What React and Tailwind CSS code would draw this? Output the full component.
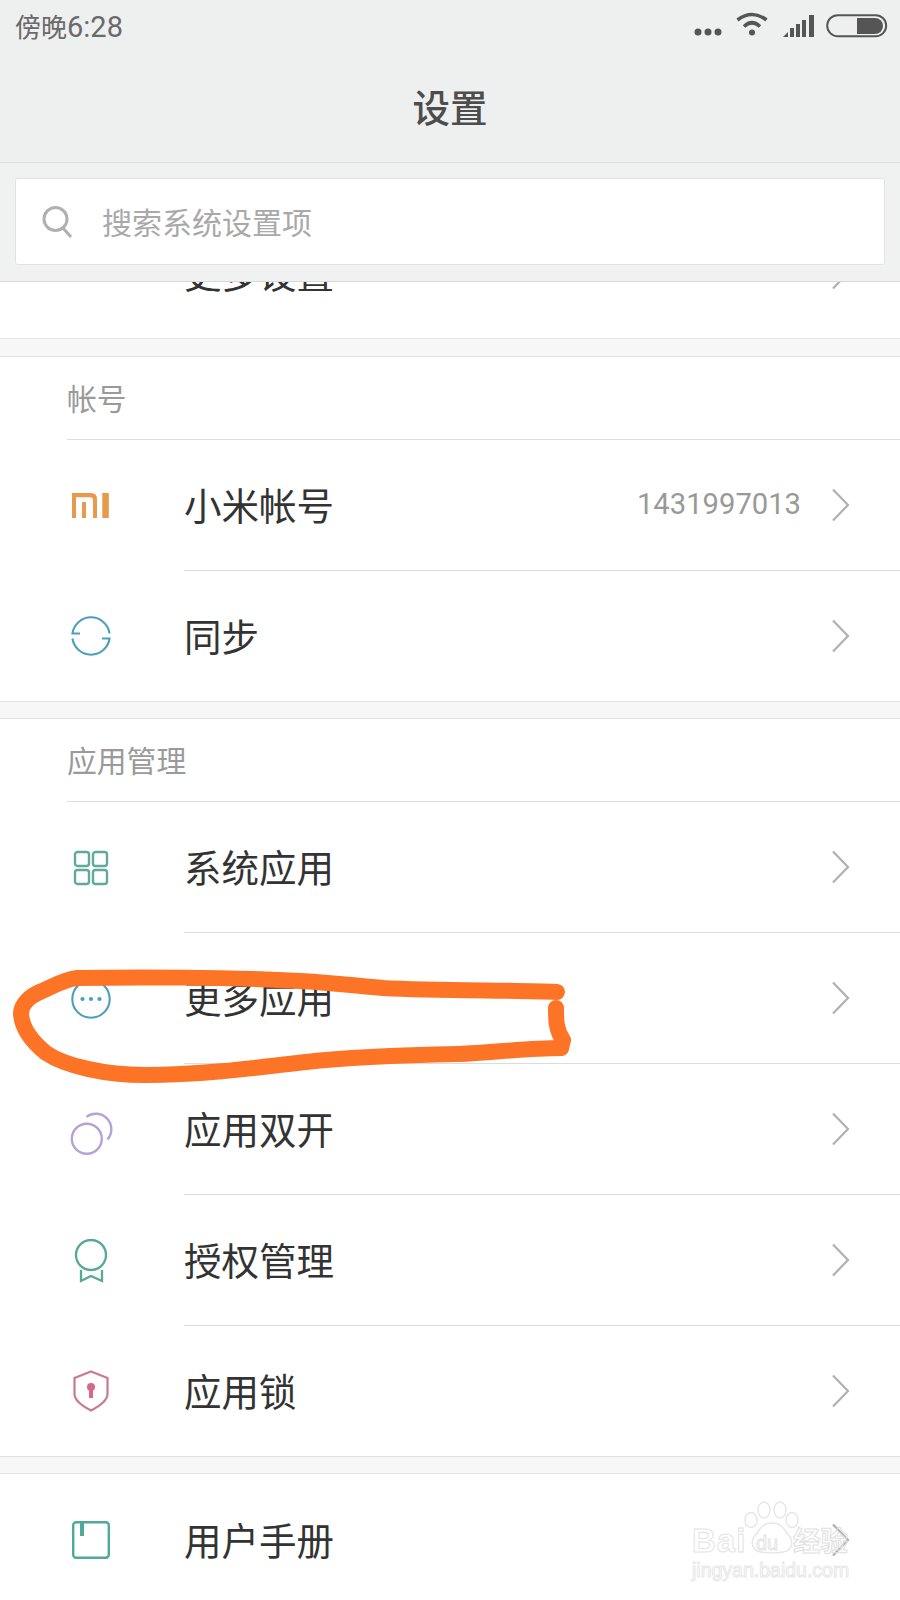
import React from "react";

const cjk = "font-['Noto_Sans_CJK_SC','Noto_Sans',sans-serif]";

const Chevron = () => (
  <svg width="19" height="34" viewBox="0 0 19 34" fill="none" stroke="#b0b0b0" strokeWidth="2.2">
    <path d="M2 1.5 L17 17 L2 32.5" />
  </svg>
);

const MiIcon = () => (
  <svg width="37" height="25" viewBox="0 0 37 25" fill="#e8994c">
    <path d="M0 0 H19 Q25 0 25 6 V25 H21 V7 Q21 4.3 18 4.3 H4 V25 H0 Z" />
    <rect x="10" y="9" width="4" height="16" />
    <rect x="30.3" y="0" width="6.5" height="25" />
  </svg>
);

const SyncIcon = () => (
  <svg width="40" height="40" viewBox="0 0 40 40" fill="none" stroke="#4c9fbc" strokeWidth="2.1">
    <path d="M9 17.5 H1.47 A18.7 18.7 0 0 1 38.53 17.5" />
    <path d="M31 22.5 H38.53 A18.7 18.7 0 0 1 1.47 22.5" />
  </svg>
);

const GridIcon = () => (
  <svg width="36" height="36" viewBox="0 0 36 36" fill="none" stroke="#60a99b" strokeWidth="2.4">
    <rect x="2" y="2" width="14" height="14" rx="2.5" />
    <rect x="20" y="2" width="14" height="14" rx="2.5" />
    <rect x="2" y="20" width="14" height="14" rx="2.5" />
    <rect x="20" y="20" width="14" height="14" rx="2.5" />
  </svg>
);

const MoreIcon = () => (
  <svg width="40" height="40" viewBox="0 0 40 40" fill="none">
    <circle cx="20" cy="20" r="18.7" stroke="#4c9fbc" strokeWidth="2.1" />
    <circle cx="11.5" cy="20" r="2.1" fill="#4c9fbc" />
    <circle cx="20" cy="20" r="2.1" fill="#4c9fbc" />
    <circle cx="28.5" cy="20" r="2.1" fill="#4c9fbc" />
  </svg>
);

const DualIcon = () => (
  <svg width="50" height="50" viewBox="2 0 50 50" fill="none" stroke="#b7a2d8" strokeWidth="2.4">
    <circle cx="22.8" cy="33.8" r="15" />
    <path d="M22.4 11.9 A15.5 15.5 0 0 1 43.5 34.4" />
  </svg>
);

const RibbonIcon = () => (
  <svg width="34" height="44" viewBox="0 0 34 44" fill="none" stroke="#57a895" strokeWidth="2.3">
    <circle cx="17" cy="16" r="15" />
    <path d="M7 31 V42 L17 37 L28 42 V31" />
  </svg>
);

const ShieldIcon = () => (
  <svg width="36" height="42" viewBox="0 0 36 42" fill="none">
    <path d="M18 1.5 L34.5 8 V24 Q34.5 32 18 40.5 Q1.5 32 1.5 24 V8 Z" stroke="#c97b8e" strokeWidth="2.2" />
    <circle cx="18" cy="17" r="4" fill="#d8678a" />
    <rect x="16" y="18" width="4" height="10" fill="#d8678a" />
  </svg>
);

const BookIcon = () => (
  <svg width="38" height="38" viewBox="0 0 38 38" fill="none" stroke="#4fa898">
    <rect x="1.2" y="1.2" width="35.6" height="35.6" rx="3" strokeWidth="2.4" />
    <rect x="8" y="1" width="4" height="14" fill="#4fa898" stroke="none" />
  </svg>
);

const Row = ({ icon, title, value, divider = true, h = "h-[131px]" }) => (
  <div className={`flex ${h} bg-white`}>
    <div className="w-[184px] shrink-0 flex items-center justify-center pr-[3px]">{icon}</div>
    <div className={`flex-1 flex items-center justify-between pr-[50px] ${divider ? "border-b border-[#dcdcdc]" : ""}`}>
      <span className="text-[37.5px] leading-none text-[#333333] mb-[2px]">{title}</span>
      <div className="flex items-center gap-[30px]">
        {value && <span className="font-['Roboto',sans-serif] text-[29.2px] leading-none text-[#999999]">{value}</span>}
        <Chevron />
      </div>
    </div>
  </div>
);

const SectionTitle = ({ children }) => (
  <div className="h-[83px] bg-white pl-[67px]">
    <div className="h-full flex items-center border-b border-[#dcdcdc] text-[29.8px] leading-none text-[#9a9a9a] pb-[1px]">
      {children}
    </div>
  </div>
);

const Gap = ({ h = "h-[19px]" }) => <div className={`${h} bg-[#f7f7f7] border-y border-[#e3e3e3]`}></div>;

const App = () => {
  return (
    <div className={`relative w-[900px] h-[1600px] overflow-hidden bg-white ${cjk}`}>
      {/* status + title */}
      <div className="h-[163px] bg-[#eef0f0] border-b border-[#dcdddd] px-[15px] relative">
        <div className="flex items-center justify-between h-[52px]">
          <span className="text-[26px] leading-none text-[#6a6a6a] mt-[2px]">
            傍晚<span className="font-['Roboto',sans-serif] text-[29px]">6:28</span>
          </span>
          <div className="flex items-center">
            <svg width="28" height="8" viewBox="0 0 28 8" fill="#555" className="mt-[11px] mr-[14px]">
              <circle cx="4" cy="4" r="3.5" />
              <circle cx="14" cy="4" r="3.5" />
              <circle cx="24" cy="4" r="3.5" />
            </svg>
            <svg width="32" height="24" viewBox="0 0 32 24" fill="none" stroke="#555" strokeWidth="3.6" className="mb-[4px] mr-[15px]">
              <path d="M1.5 8 Q16 -3 30.5 8" />
              <path d="M8 14.5 Q16 7 24 14.5" />
              <circle cx="16" cy="20.5" r="3" fill="#555" stroke="none" />
            </svg>
            <svg width="32" height="22" viewBox="0 0 32 22" fill="#555" className="mr-[11px]">
              <path d="M0 22 L5 17 V22 Z" />
              <rect x="7" y="13" width="4" height="9" />
              <rect x="13" y="9" width="4" height="13" />
              <rect x="19" y="5" width="4" height="17" />
              <rect x="26" y="0" width="5" height="22" />
            </svg>
            <svg width="62" height="24" viewBox="0 0 62 24" fill="none" className="mr-[-3px]">
              <rect x="1.2" y="1.2" width="59" height="21" rx="10.5" stroke="#555" strokeWidth="2" />
              <path d="M31 4 H49 A8 8 0 0 1 49 20 H31 Z" fill="#555" />
            </svg>
          </div>
        </div>
        <div className="flex justify-center mt-[35px]">
          <span className="text-[37.5px] leading-none font-medium text-[#4d4d4d]">设置</span>
        </div>
      </div>

      {/* search */}
      <div className="relative z-10 h-[119px] bg-[#f0f1f1] border-b border-[#d9d9d9] pt-[15px] px-[15px]">
        <div className="h-[87px] w-[870px] bg-white border border-[#e2e2e2] rounded-[3px] flex items-center pl-[26px]">
          <svg width="32" height="34" viewBox="0 0 32 34" fill="none" stroke="#b0b0b0" strokeWidth="3">
            <circle cx="13.5" cy="14" r="11.5" />
            <path d="M21 23 L29 32" />
          </svg>
          <span className="ml-[28px] text-[30px] leading-none text-[#a9a9a9] mb-[2px]">搜索系统设置项</span>
        </div>
      </div>

      {/* list */}
      <div className="mt-[-75px]">
        <Row title="更多设置" icon={null} divider={false} />
        <Gap />
        <SectionTitle>帐号</SectionTitle>
        <Row icon={<MiIcon />} title="小米帐号" value="1431997013" />
        <Row icon={<SyncIcon />} title="同步" divider={false} h="h-[130px]" />
        <Gap h="h-[18px]" />
        <SectionTitle>应用管理</SectionTitle>
        <Row icon={<GridIcon />} title="系统应用" />
        <Row icon={<MoreIcon />} title="更多应用" />
        <Row icon={<DualIcon />} title="应用双开" />
        <Row icon={<RibbonIcon />} title="授权管理" />
        <Row icon={<ShieldIcon />} title="应用锁" divider={false} h="h-[130px]" />
        <Gap h="h-[18px]" />
        <Row icon={<BookIcon />} title="用户手册" divider={false} />
      </div>

      {/* hand drawn mark */}
      <svg width="900" height="1600" viewBox="0 0 900 1600" fill="none" className="absolute inset-0 z-20 pointer-events-none" stroke="#fd7427" strokeWidth="16" strokeLinecap="round" strokeLinejoin="round">
        <path d="M557 992 C510 990 440 991 383 988 C350 985 335 983 300 981 C230 977 130 977 77 978 C66 979 55 985 42 991 C30 996 21 1004 21 1014 C22 1028 30 1040 46 1053 C65 1066 105 1075 145 1075 C200 1075 255 1068 306 1062 C350 1057 410 1055 459 1054 C490 1053 525 1048 561 1048" />
        <path d="M556 1008 C556 1020 556 1030 563 1040 L561 1048" />
      </svg>

      {/* watermark */}
      <div className="absolute z-30 left-[690px] top-[1500px] w-[165px] h-[85px] pointer-events-none">
        <svg width="56" height="54" viewBox="0 0 56 54" fill="#ffffff" stroke="#e6e6e6" strokeWidth="1.4" className="absolute left-[54px] top-[1px]">
          <ellipse cx="7" cy="19" rx="6" ry="7.5" />
          <ellipse cx="20" cy="9" rx="6" ry="8" />
          <ellipse cx="36" cy="9" rx="6" ry="8" />
          <ellipse cx="48" cy="19" rx="6" ry="7.5" />
          <path d="M28 22 C38 22 41 30 46 36 C50 42 47 50 39 51 C33 52 23 52 17 51 C9 50 6 42 10 36 C15 30 18 22 28 22 Z" />
        </svg>
        <span className="absolute left-[2px] top-[24px] font-['Liberation_Sans',sans-serif] font-bold text-[33px] tracking-[1px] leading-none text-transparent [-webkit-text-stroke:1px_#e4e4e4]">Bai</span>
        <span className="absolute left-[66px] top-[33px] font-['Liberation_Sans',sans-serif] text-[20px] leading-none text-transparent [-webkit-text-stroke:1px_#e4e4e4]">du</span>
        <span className="absolute left-[103px] top-[26px] font-bold text-[27.5px] leading-none text-transparent [-webkit-text-stroke:1px_#e0e0e0]">经验</span>
        <span className="absolute left-[2px] top-[61px] font-['Liberation_Sans',sans-serif] text-[19.5px] leading-none text-transparent [-webkit-text-stroke:1px_#e8e8e8]">jingyan.baidu.com</span>
      </div>
    </div>
  );
};

export default App;
